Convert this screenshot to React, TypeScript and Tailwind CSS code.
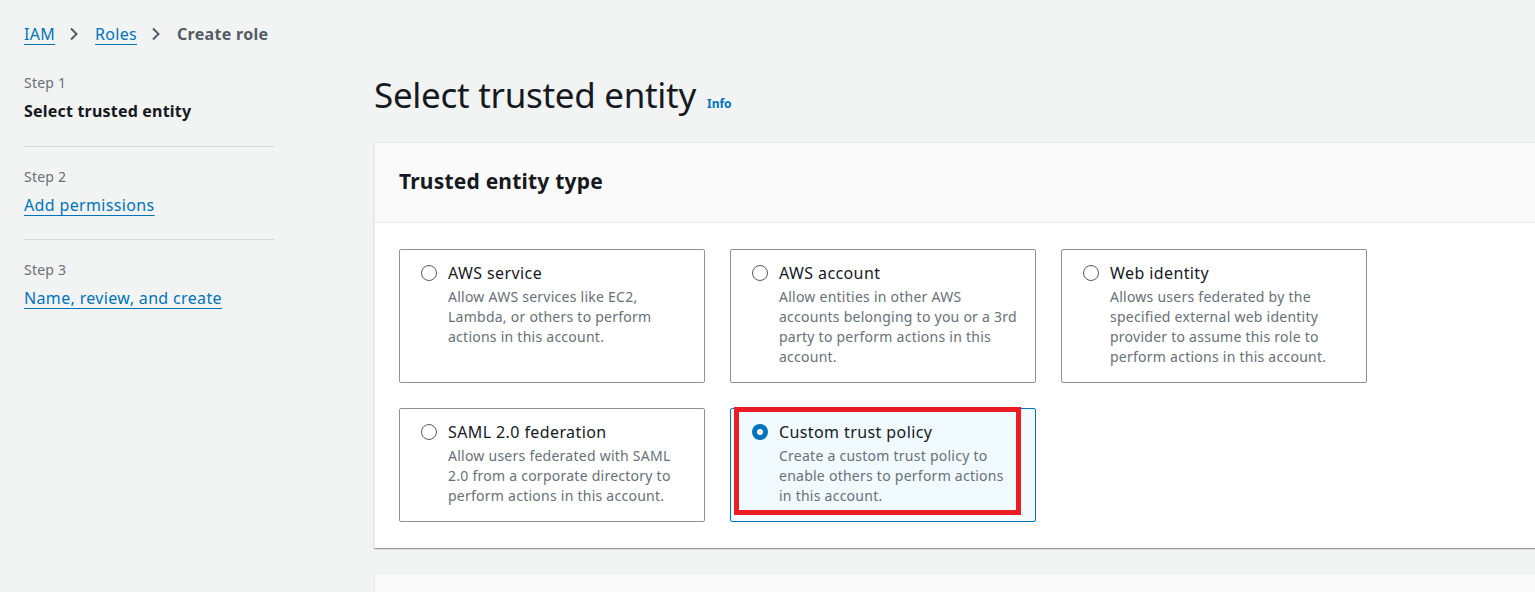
import React from "react";

type Option = {
  title: string;
  desc: string;
  selected?: boolean;
};

const options: Option[] = [
  {
    title: "AWS service",
    desc: "Allow AWS services like EC2, Lambda, or others to perform actions in this account.",
  },
  {
    title: "AWS account",
    desc: "Allow entities in other AWS accounts belonging to you or a 3rd party to perform actions in this account.",
  },
  {
    title: "Web identity",
    desc: "Allows users federated by the specified external web identity provider to assume this role to perform actions in this account.",
  },
  {
    title: "SAML 2.0 federation",
    desc: "Allow users federated with SAML 2.0 from a corporate directory to perform actions in this account.",
  },
  {
    title: "Custom trust policy",
    desc: "Create a custom trust policy to enable others to perform actions in this account.",
    selected: true,
  },
];

const Chevron: React.FC = () => (
  <svg width="16" height="16" viewBox="0 0 16 16" className="ml-[11px] mr-[13px] shrink-0">
    <path d="M5 2.5l5.5 5.5-5.5 5.5" fill="none" stroke="#545b64" strokeWidth="2" />
  </svg>
);

const Radio: React.FC<{ checked?: boolean }> = ({ checked }) =>
  checked ? (
    <span className="mt-[4px] flex size-[16px] shrink-0 items-center justify-center rounded-full bg-[#0073bb]">
      <span className="size-[6px] rounded-full bg-white" />
    </span>
  ) : (
    <span className="mt-[4px] size-[16px] shrink-0 rounded-full border border-[#545b64] bg-white" />
  );

const OptionCard: React.FC<{ opt: Option }> = ({ opt }) => (
  <div
    className={
      opt.selected
        ? "relative flex gap-[11px] rounded-[2px] border border-[#0073bb] bg-[#f1faff] pl-[21px] pr-[17px] pt-[11px] pb-[15px]"
        : "relative flex gap-[11px] rounded-[2px] border border-[#879596] bg-white pl-[21px] pr-[17px] pt-[11px] pb-[15px]"
    }
  >
    <Radio checked={opt.selected} />
    <div className="flex flex-col gap-[2px]">
      <div className="text-[16px] leading-[24px] tracking-[0.4px] text-[#16191f]">{opt.title}</div>
      <div className="text-[14px] leading-[20px] tracking-[0.25px] text-[#687078]">{opt.desc}</div>
    </div>
    {opt.selected && (
      <div className="pointer-events-none absolute left-[3px] top-[-2px] h-[108px] w-[287px] border-[5px] border-[#ec1c24]" />
    )}
  </div>
);

export default function App() {
  return (
    <div
      className="h-[592px] w-[1535px] overflow-hidden bg-[#f2f3f3] text-[#16191f]"
      style={{ fontFamily: '"Noto Sans", "Open Sans", Arial, sans-serif' }}
    >
      <div className="flex items-center pl-[24px] pt-[22px] text-[16px] leading-[24px] tracking-[0.3px]">
        <a className="text-[#0073bb] underline underline-offset-[4px]">IAM</a>
        <Chevron />
        <a className="text-[#0073bb] underline underline-offset-[4px]">Roles</a>
        <Chevron />
        <span className="font-bold text-[#545b64]">Create role</span>
      </div>

      <div className="flex pt-[26px]">
        <nav className="ml-[24px] w-[250px] shrink-0">
          <div className="pb-[24px]">
            <div className="text-[14px] leading-[22px] tracking-[0.2px] text-[#687078]">Step 1</div>
            <div className="mt-[6px] text-[16px] font-bold leading-[22px] tracking-[0.2px]">Select trusted entity</div>
          </div>
          <div className="border-t border-[#d5dbdb] pt-[19px] pb-[22px]">
            <div className="text-[14px] leading-[22px] tracking-[0.2px] text-[#687078]">Step 2</div>
            <a className="mt-[6px] inline-block text-[16px] leading-[22px] tracking-[0.35px] text-[#0073bb] underline underline-offset-[4px]">
              Add permissions
            </a>
          </div>
          <div className="border-t border-[#d5dbdb] pt-[19px]">
            <div className="text-[14px] leading-[22px] tracking-[0.2px] text-[#687078]">Step 3</div>
            <a className="mt-[6px] inline-block text-[16px] leading-[22px] tracking-[0.35px] text-[#0073bb] underline underline-offset-[4px]">
              Name, review, and create
            </a>
          </div>
        </nav>

        <main className="ml-[100px] flex-1">
          <div className="flex items-baseline gap-[11px]">
            <h1 className="text-[35px] font-normal leading-[46px] tracking-[-0.3px] text-[#16191f]">Select trusted entity</h1>
            <a className="text-[12px] font-bold text-[#0073bb]">Info</a>
          </div>

          <section className="mt-[24px] w-[1400px] border-l border-t border-[#eaeded] bg-white shadow-[0_1px_1px_0_rgba(0,28,36,0.3),1px_1px_1px_0_rgba(0,28,36,0.15)]">
            <div className="flex h-[80px] items-center border-b border-[#eaeded] bg-[#fafafa] px-[24px] pb-[4px]">
              <h2 className="text-[21px] font-bold leading-[28px] tracking-[0.2px]">Trusted entity type</h2>
            </div>
            <div className="grid grid-cols-[306px_306px_306px] gap-[25px] px-[24px] pt-[26px] pb-[26px]">
              {options.map((o) => (
                <OptionCard key={o.title} opt={o} />
              ))}
            </div>
          </section>

          <section className="mt-[25px] h-[40px] w-[1400px] border-l border-t border-[#eaeded] bg-[#fafafa]" />
        </main>
      </div>
    </div>
  );
}
